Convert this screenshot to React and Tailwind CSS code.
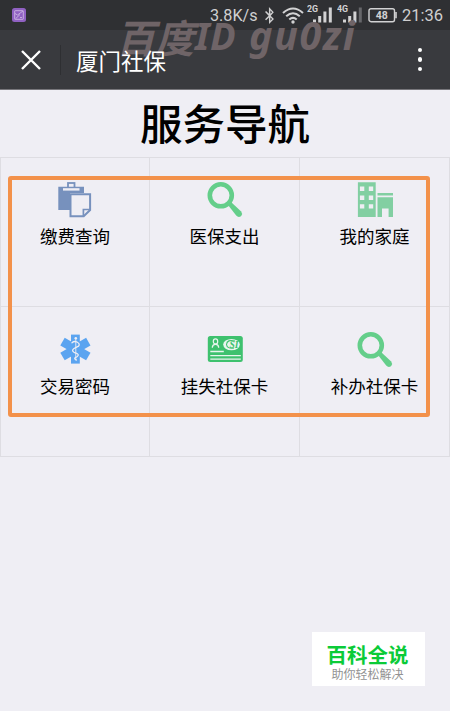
import { FaBluetoothB } from 'react-icons/fa';
import clsx from 'clsx';

const ClipboardIcon = () => (
  <svg viewBox="0 0 36 36" className="w-9 h-9">
    <rect x="11" y="1" width="6.5" height="6" fill="none" stroke="#7791bd" strokeWidth="1.8" />
    <path d="M1.3 4.7H27V11H13V28H1.3Z" fill="#7791bd" />
    <rect x="6" y="6.2" width="16.5" height="2.4" fill="#efeef4" />
    <path d="M13.5 12.2H33.1V28L26.7 34.2H13.5Z" fill="#efeef4" stroke="#7791bd" strokeWidth="2" />
    <path d="M26.4 34V27.5H33" fill="none" stroke="#7791bd" strokeWidth="1.7" />
  </svg>
);

const SearchIcon = () => (
  <svg viewBox="0 0 36 36" className="w-9 h-9">
    <circle cx="13.8" cy="13.3" r="11" fill="none" stroke="#64ce8a" strokeWidth="4.6" />
    <path d="M21 23L24 20L34.2 29.4Q36 31.7 34.2 34Q31.6 36 29.2 33.6Z" fill="#64ce8a" />
  </svg>
);

const BuildingIcon = () => (
  <svg viewBox="0 0 36 36" className="w-9 h-9">
    <path
      fill="#82cfa2"
      fillRule="evenodd"
      d="M0.9 0.2H18.7V35H0.9ZM2.9 4.6V9H7.3V4.6ZM11.8 4.6V9H16.2V4.6ZM2.9 13.5V17.9H7.3V13.5ZM11.8 13.5V17.9H16.2V13.5ZM2.9 22.2V26.6H7.3V22.2ZM11.8 22.2V26.6H16.2V22.2Z"
    />
    <path fill="#82cfa2" d="M20.5 11H36V13.4H20.5ZM20.5 15.2H36V35H31.6V26.6H25V35H20.5Z" />
  </svg>
);

const MedicalIcon = () => (
  <svg viewBox="0 0 36 36" className="w-9 h-9">
    <g fill="#5ba4f0">
      <rect x="14" y="2.6" width="8.8" height="29" />
      <rect x="14" y="2.2" width="8.8" height="29.8" transform="rotate(60 18.4 17.1)" />
      <rect x="14" y="2.2" width="8.8" height="29.8" transform="rotate(-60 18.4 17.1)" />
    </g>
    <g fill="none" stroke="#efeef4" strokeLinecap="round">
      <circle cx="18.8" cy="6.2" r="1.3" fill="#efeef4" stroke="none" />
      <path d="M18.8 7V28" strokeWidth="0.9" />
      <path d="M15 10.7Q17 8.7 20 10Q23.5 12 21.5 14.2L17 16.5Q14.2 18.5 17 20.3L20 21.5Q22.5 23 20 24.7L18 25.8Q17 27 19.5 28" strokeWidth="1.3" />
    </g>
  </svg>
);

const CardIcon = () => (
  <svg viewBox="0 0 36 36" className="w-9 h-9">
    <rect x="0.8" y="4.1" width="35" height="25.9" rx="2.5" fill="#3ec16e" />
    <g fill="none" stroke="#e8f5ee" strokeWidth="1.2">
      <ellipse cx="8.5" cy="9.4" rx="2.2" ry="2.6" />
      <path d="M5.3 15.7Q5.3 12.8 8.5 12.2Q11.7 12.8 11.7 15.7" />
      <path d="M3.3 19.5H16.8M3.3 23.6H33.8M3.3 27.2H33.8" strokeWidth="1.3" />
    </g>
    <ellipse cx="24.5" cy="12.6" rx="8.3" ry="5.7" fill="#e8f5ee" />
    <path d="M28 9Q20 7 19.5 12.5Q20 17 27 16" fill="none" stroke="#3ec16e" strokeWidth="1.1" />
    <text x="22.5" y="16.2" fontSize="9.5" fontWeight="bold" fontStyle="italic" fill="#3ec16e" fontFamily="Liberation Serif, serif">SI</text>
  </svg>
);

const items = [
  { label: '缴费查询', Icon: ClipboardIcon },
  { label: '医保支出', Icon: SearchIcon },
  { label: '我的家庭', Icon: BuildingIcon },
  { label: '交易密码', Icon: MedicalIcon },
  { label: '挂失社保卡', Icon: CardIcon },
  { label: '补办社保卡', Icon: SearchIcon },
];

const Signal = ({ label, weak }) => (
  <svg viewBox="0 0 26 20" className="w-[26px] h-5 shrink-0">
    <text x="0" y="6.6" fontSize="8.8" fontWeight="bold" fill="#d2d2d3" fontFamily="Roboto, sans-serif">{label}</text>
    <g fill="#d2d2d3">
      <rect x="6" y="14.5" width="3" height="3" />
      <rect x="11.2" y="11" width="3" height="6.5" />
      <rect x="16.4" y="6.5" width="3" height="11" />
      <rect x="21.8" y="2.5" width="3" height="15" fill={weak ? '#66676a' : '#d2d2d3'} />
    </g>
  </svg>
);

const StatusBar = () => (
  <div className="h-[30px] bg-[#2f3033] flex items-center text-[#cfcfd0] font-[Roboto,sans-serif]">
    <svg viewBox="0 0 14 14" className="w-3.5 h-3.5 ml-3 shrink-0">
      <rect width="14" height="14" rx="2.5" fill="#9061c2" />
      <g fill="none" stroke="#cdb5e3" strokeWidth="0.9">
        <rect x="2.7" y="2.7" width="8.6" height="8.6" rx="0.5" />
        <path d="M3 5.5L5.5 7L11 3M3.5 10.8L8 6.5M8 9.5H10" />
      </g>
    </svg>
    <span className="relative z-10 ml-[184px] w-[50px] pt-0.5 text-[16.2px] leading-none whitespace-nowrap">3.8K/s</span>
    <FaBluetoothB className="ml-px w-[17px] h-[17px] shrink-0" />
    <svg viewBox="0 0 22 17" className="w-[22px] h-[17px] ml-1 shrink-0">
      <g fill="none" stroke="#d2d2d3" strokeWidth="2.1">
        <path d="M1 6Q11 -3 21 6M4.2 9.3Q11 3.2 17.8 9.3M7.3 12.5Q11 9.2 14.7 12.5" />
      </g>
      <circle cx="11" cy="15" r="1.7" fill="#d2d2d3" />
    </svg>
    <div className="flex gap-1 ml-[3px]">
      <Signal label="2G" />
      <Signal label="4G" weak />
    </div>
    <svg viewBox="0 0 30 16" className="w-[30px] h-4 ml-[5px] shrink-0">
      <rect x="1" y="1.7" width="25.5" height="13" rx="2" fill="none" stroke="#d2d2d3" strokeWidth="1.4" />
      <path d="M28 5V11.3" stroke="#d2d2d3" strokeWidth="1.6" />
      <text x="13.8" y="12" textAnchor="middle" fontSize="10.5" fontWeight="bold" fill="#d2d2d3" fontFamily="Roboto, sans-serif">48</text>
    </svg>
    <span className="ml-1 pt-0.5 text-[16.5px] leading-none">21:36</span>
  </div>
);

const Header = () => (
  <div className="h-[60px] bg-[#393a3e] border-b border-[#77767b] flex items-center text-white">
    <svg viewBox="0 0 20 20" className="w-5 h-5 ml-[21px]">
      <path d="M1 1L19 19M19 1L1 19" stroke="#fff" strokeWidth="2.4" />
    </svg>
    <div className="w-px h-[30px] ml-[19px] bg-[#2e2f32]" />
    <h1 className="relative z-10 ml-[15px] pt-px text-[22.5px] leading-none">厦门社保</h1>
    <div className="ml-auto mr-[28px] flex flex-col gap-[5px]">
      <i className="size-[4.5px] rounded-full bg-white" />
      <i className="size-[4.5px] rounded-full bg-white" />
      <i className="size-[4.5px] rounded-full bg-white" />
    </div>
  </div>
);

export default function App() {
  return (
    <main className="relative w-[450px] h-[711px] overflow-hidden bg-[#efeef4] text-black font-['Noto_Sans_CJK_SC',sans-serif]">
      <StatusBar />
      <Header />

      <h2 className="h-[67px] text-center text-[42.5px] leading-[63px] font-medium">服务导航</h2>

      <div className="grid grid-cols-[149px_150px_150px] grid-rows-[149px_150px] border-t border-l border-[#dedde2]">
        {items.map(({ label, Icon }, i) => (
          <div
            key={label}
            className={clsx('flex flex-col items-center border-r border-b border-[#dedde2]', i < 3 ? 'pt-6' : 'pt-[25px]')}
          >
            <Icon />
            <span className="mt-[6px] text-[17.5px] leading-6 whitespace-nowrap">{label}</span>
          </div>
        ))}
      </div>

      {/* highlight frame over the menu */}
      <div className="absolute left-[8px] top-[176px] w-[422px] h-[241px] border-4 border-[#f3914a] rounded-[3px]" />

      <div className="absolute left-[116px] top-[11px] flex text-[#6f6467] font-bold italic leading-[50px] whitespace-nowrap">
        <span className="w-[79px] text-[39px]">百度</span>
        <span className="w-[54px] text-[38px] leading-[48px] tracking-[0.5px] font-['Noto_Sans',sans-serif]">ID</span>
        <span className="text-[39.5px] leading-[48px] tracking-[1.5px] font-['Noto_Sans',sans-serif]">gu0zi</span>
      </div>

      <div className="absolute left-[312px] top-[632px] w-[113px] h-[54px] bg-white text-center">
        <p className="mt-[9px] mr-[2px] text-[20.5px] leading-[26px] font-bold text-[#0bcb38]">百科全说</p>
        <p className="mr-[2px] text-[12px] leading-[13px] text-[#929292]">助你轻松解决</p>
      </div>
    </main>
  );
}
